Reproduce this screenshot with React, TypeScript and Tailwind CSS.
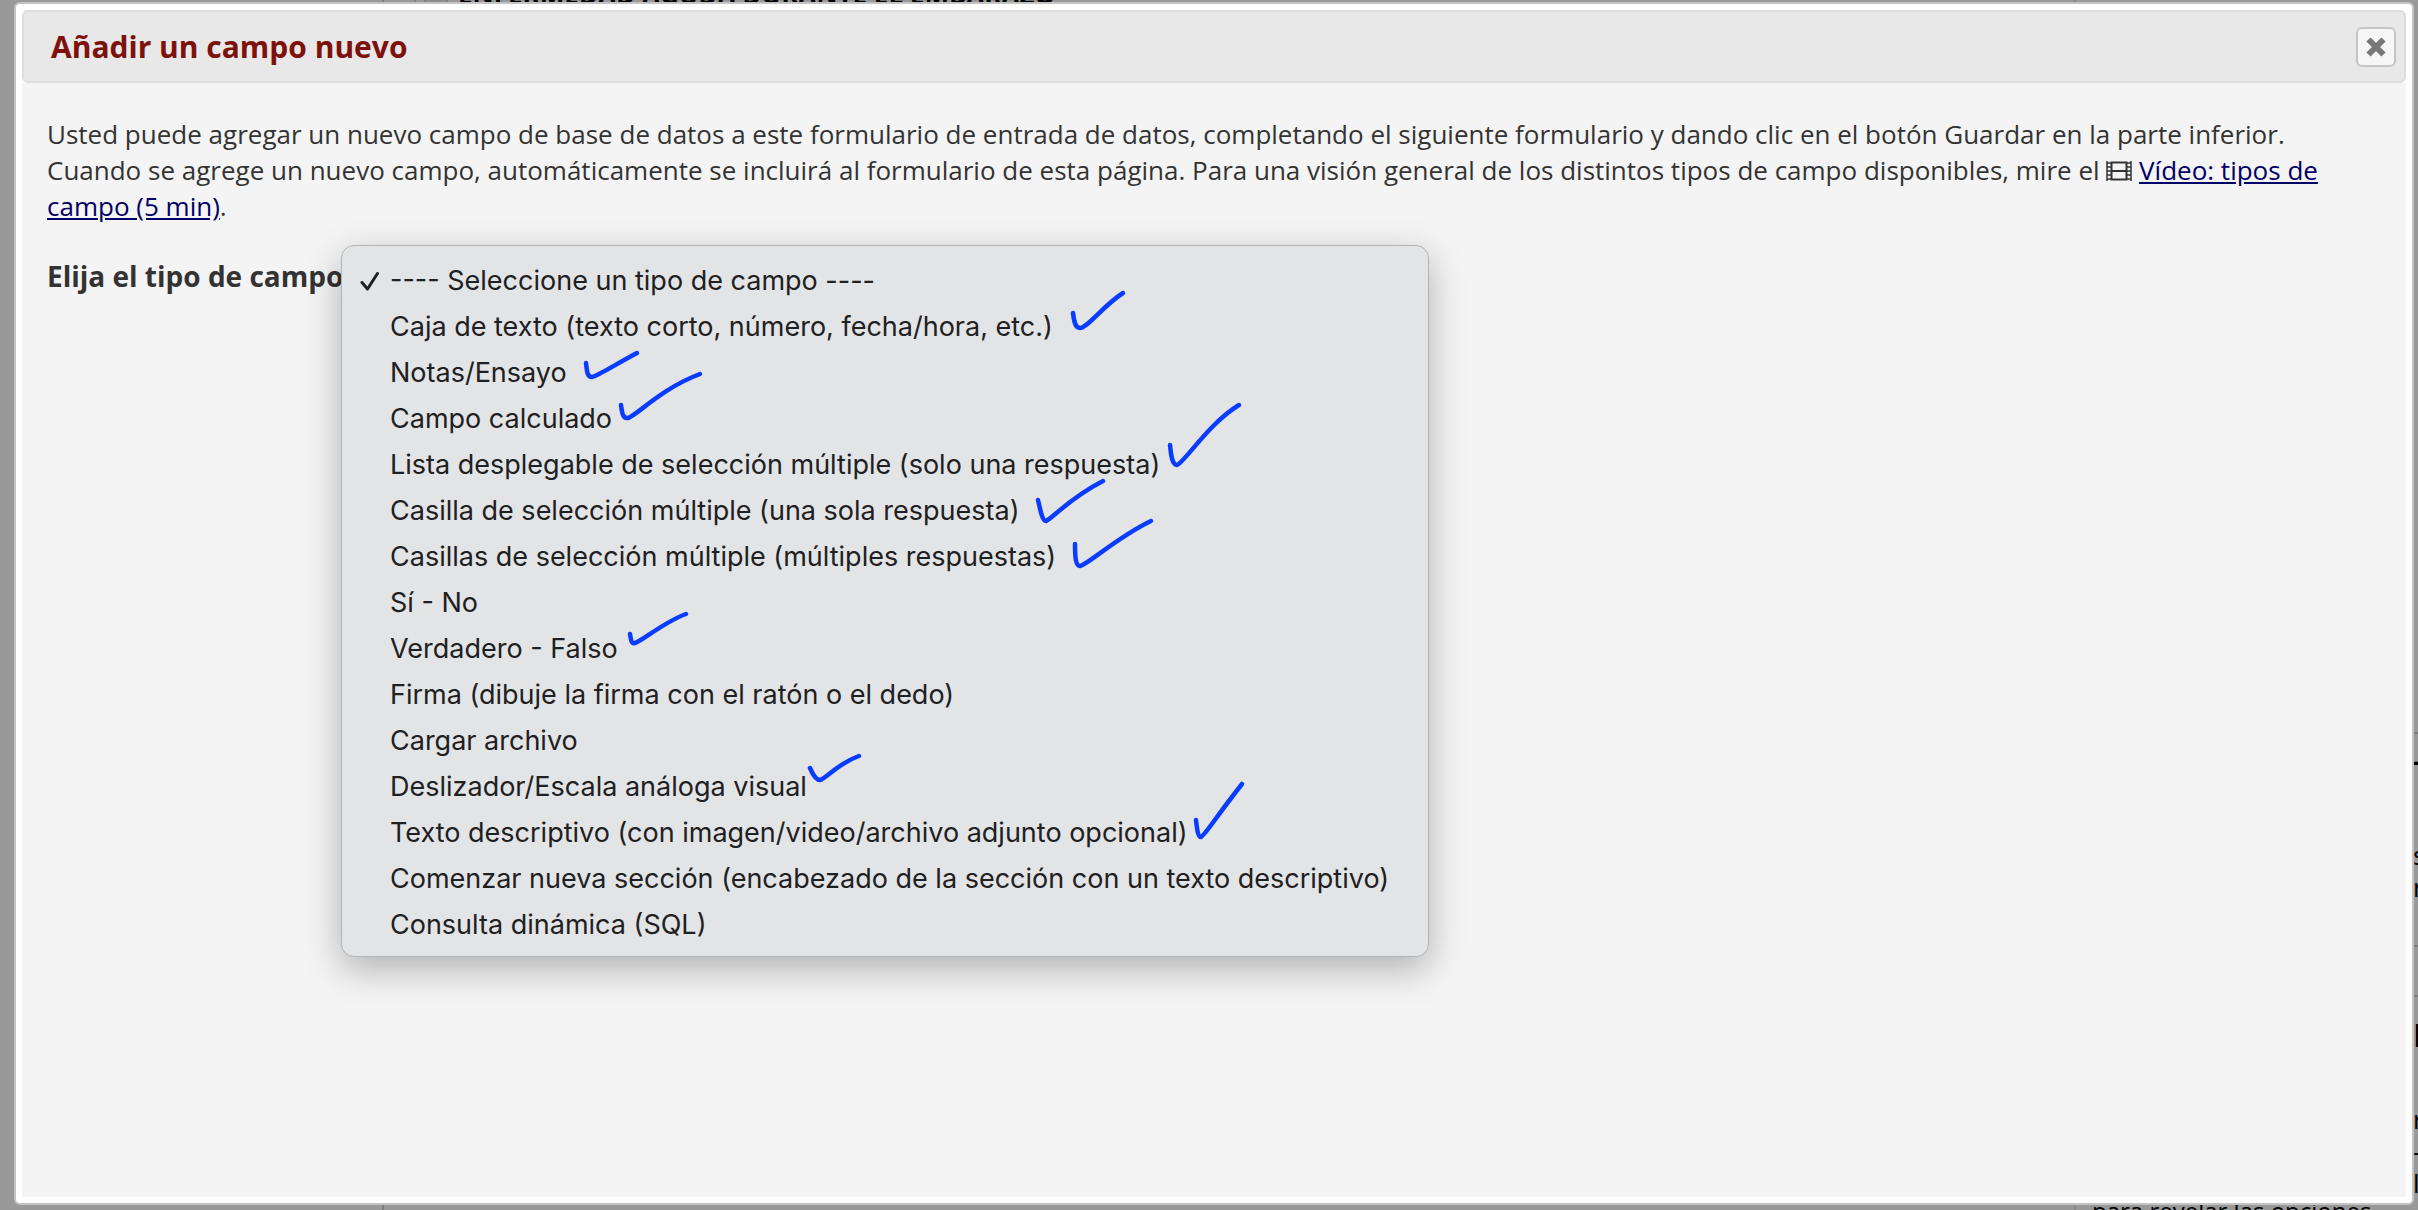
import { FormEvent, useState } from "react";

const fieldTypes = [
  "---- Seleccione un tipo de campo ----",
  "Caja de texto (texto corto, número, fecha/hora, etc.)",
  "Notas/Ensayo",
  "Campo calculado",
  "Lista desplegable de selección múltiple (solo una respuesta)",
  "Casilla de selección múltiple (una sola respuesta)",
  "Casillas de selección múltiple (múltiples respuestas)",
  "Sí - No",
  "Verdadero - Falso",
  "Firma (dibuje la firma con el ratón o el dedo)",
  "Cargar archivo",
  "Deslizador/Escala análoga visual",
  "Texto descriptivo (con imagen/video/archivo adjunto opcional)",
  "Comenzar nueva sección (encabezado de la sección con un texto descriptivo)",
  "Consulta dinámica (SQL)",
];

function FilmIcon() {
  return (
    <svg viewBox="0 0 26 20" className="inline h-5 w-[26px] align-[-1px]" fill="none" stroke="currentColor" aria-hidden="true">
      <path strokeWidth="2" d="M5.500 1.500H20.500V18.500H5.500ZM5.500 10H20.500" />
      <path strokeWidth="1.500" d="M1 0V20M25 0V20M1 2H5M1 6H5M1 10H5M1 14H5M1 18H5M21 2H25M21 6H25M21 10H25M21 14H25M21 18H25" />
    </svg>
  );
}

function CloseIcon() {
  return (
    <svg viewBox="0 0 20 20" className="size-5" fill="none" stroke="#777777" strokeWidth="6" aria-hidden="true">
      <path d="M2.500 2.500L17.500 17.500M17.500 2.500L2.500 17.500" />
    </svg>
  );
}

function SelectedTick() {
  return (
    <svg viewBox="0 0 20 20" className="size-5" fill="none" stroke="#1f2021" strokeWidth="3" strokeLinecap="round" strokeLinejoin="round" aria-hidden="true">
      <path d="M2 11.500L7.500 18L17.500 2.500" />
    </svg>
  );
}

function PenMarks() {
  return (
    <svg
      viewBox="341 245 1088 712"
      className="pointer-events-none absolute -left-px -top-px h-[712px] w-[1088px]"
      fill="none"
      stroke="#0a3cff"
      strokeWidth="4.500"
      strokeLinecap="round"
      strokeLinejoin="round"
      aria-hidden="true"
    >
      <path d="M1073 313C1074 321 1075 328 1080 328C1087 328 1103 306 1123 293" />
      <path d="M586 363C587 371 587 377 592 377C598 376 616 364 637 353" />
      <path d="M621 405C622 413 623 419 628 418C636 416 662 388 700 374" />
      <path d="M1170 445C1171 455 1172 465 1177 465C1184 463 1209 423 1239 405" />
      <path d="M1038 500C1040 508 1042 521 1046 521C1052 519 1068 499 1103 481" />
      <path d="M1075 544C1075 558 1076 566 1080 566C1087 565 1119 536 1151 521" />
      <path d="M630 634C631 640 631 644 635 643C642 641 664 622 686 614" />
      <path d="M810 768C813 775 816 780 820 780C827 778 837 764 859 756" />
      <path d="M1196 820C1197 829 1198 837 1201 837C1205 835 1216 817 1242 784" />
    </svg>
  );
}

function PageBehind() {
  return (
    <div className="absolute inset-0 flex overflow-hidden bg-[#999999] text-black" aria-hidden="true">
      <div className="w-[384px] shrink-0 border-r-2 border-[#7d7d7d]" />
      <div className="ml-[30px] flex-1">
        <div className="flex h-[3px] border-l-2 border-[#808080]">
          <div className="ml-2 w-6 border-x-2 border-[#7d7d7d] bg-[#8c8c8c]" />
          <p className="-mt-[22px] ml-2.5 h-8 text-[26px] leading-8 font-bold whitespace-nowrap">
            ENFERMEDAD AGUDA DURANTE EL EMBARAZO
          </p>
        </div>
      </div>
      <div className="flex w-[344px] shrink-0 flex-col justify-end border-l-2 border-[#8a8a8a] pl-4">
        <p className="-mb-[17px] text-[24px] leading-8 font-medium whitespace-nowrap">para revelar las opciones</p>
      </div>
      <div className="absolute top-[732px] right-0 flex w-[5px] flex-col overflow-hidden border-t-2 border-[#7d7d7d] text-[26px] leading-8">
        <b className="mt-[11px]">-</b>
        <span className="mt-[62px]">s</span>
        <span>n</span>
        <span className="mt-[42px] h-[52px] border-y-2 border-[#7d7d7d]" />
        <b className="mt-[22px] text-[32px]">I</b>
        <span className="mt-[52px]">r</span>
        <span>-</span>
        <span>l</span>
      </div>
    </div>
  );
}

export default function App() {
  const [selected, setSelected] = useState(0);
  const stop = (e: FormEvent) => e.preventDefault();

  return (
    <div className="relative flex min-h-screen pt-0.5 pr-1 pb-[5px] pl-3.5 font-['Open_Sans',sans-serif]">
      <PageBehind />
      <section
        role="dialog"
        aria-labelledby="dialog-title"
        className="relative flex flex-1 flex-col rounded-md border-2 border-[#c4c4c4] bg-white p-1.5"
      >
        <header className="flex items-center justify-between rounded-md border-2 border-[#dddddd] bg-[#e8e8e8] pt-[15px] pr-2 pb-3.5 pl-[27px]">
          <h1 id="dialog-title" className="text-[30px] leading-10 font-bold text-[#7c120b]">
            Añadir un campo nuevo
          </h1>
          <button
            type="button"
            aria-label="Cerrar"
            className="flex size-10 items-center justify-center rounded-md border-2 border-[#c4c4c4] bg-[#f6f6f6]"
          >
            <CloseIcon />
          </button>
        </header>

        <form onSubmit={stop} className="flex-1 bg-[#f4f4f4] px-[25px] pt-[33px] text-[26px] leading-9 text-[#333333]">
          <p className="mr-[60px]">
            Usted puede agregar un nuevo campo de base de datos a este formulario de entrada de datos, completando el
            siguiente formulario y dando clic en el botón Guardar en la parte inferior. Cuando se agrege un nuevo campo,
            automáticamente se incluirá al formulario de esta página. Para una visión general de los distintos tipos de
            campo disponibles, mire el <FilmIcon />{" "}
            <a href="#video" className="text-[#000066] underline">
              Vídeo: tipos de campo (5 min)
            </a>
            .
          </p>

          <div className="mt-8 flex items-center">
            <label htmlFor="field-type" className="w-[294px] shrink-0 text-[28px] leading-10 font-bold whitespace-nowrap">
              Elija el tipo de campo
            </label>
            <div className="relative">
              <select
                id="field-type"
                value={selected}
                onChange={(e) => setSelected(Number(e.target.value))}
                className="h-10 w-[1000px] rounded border border-[#aaaaaa] bg-white"
              >
                {fieldTypes.map((name, i) => (
                  <option key={name} value={i}>
                    {name}
                  </option>
                ))}
              </select>
              <div className="absolute -top-[11px] left-0 w-[1088px] rounded-[13px] border border-[#b3b4b5] bg-[#e2e4e6] pt-3 pb-2 font-[Inter,sans-serif] text-[27px] leading-[46px] text-[#1f2021] shadow-[0_12px_36px_rgba(0,0,0,0.28)]">
                <ul role="listbox" aria-label="Elija el tipo de campo">
                  {fieldTypes.map((name, i) => (
                    <li
                      key={name}
                      role="option"
                      aria-selected={i === selected}
                      onClick={() => setSelected(i)}
                      className="flex items-center pl-[18px] whitespace-nowrap"
                    >
                      <span className="w-[30px] shrink-0">{i === selected && <SelectedTick />}</span>
                      {name}
                    </li>
                  ))}
                </ul>
                <PenMarks />
              </div>
            </div>
          </div>
        </form>
      </section>
    </div>
  );
}
